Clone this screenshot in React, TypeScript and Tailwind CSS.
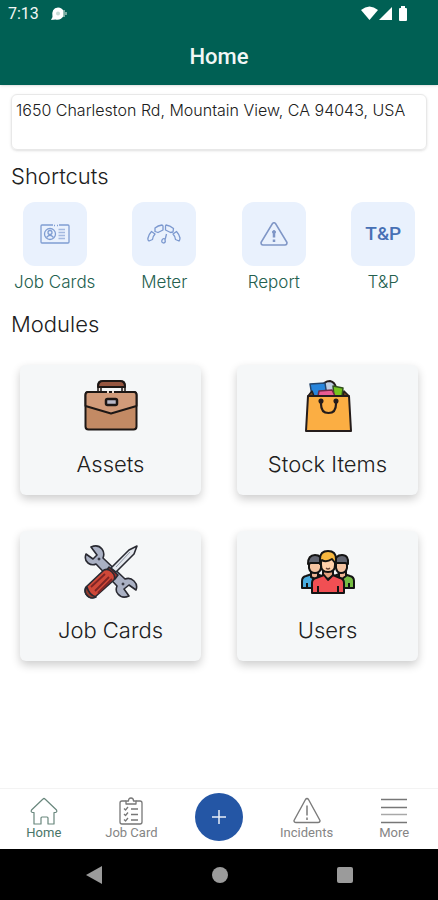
import type { ReactNode } from "react";

function StatusIcons() {
  return (
    <svg width="50" height="18" viewBox="0 0 50 18" fill="#fff" aria-hidden="true">
      <path d="M1 5Q9.500-2 18 5L9.500 15Z" />
      <path d="M19 15 32 2V15Z" />
      <path d="M41 1h4v2h1q1 0 1 1v11q0 1-1 1h-6q-1 0-1-1V4q0-1 1-1h1Z" />
    </svg>
  );
}

function NoticeIcon() {
  return (
    <svg width="16" height="14" viewBox="0 0 16 14" aria-hidden="true">
      <path d="M0 13 1.500 10Q0 1 7 .5q4 0 5.500 3.500v5Q10 13.500 4.500 12.500Z" fill="#fff" />
      <circle cx="7" cy="6.500" r="2" fill="#c7dbd6" />
      <path d="M13 3v7M15 5v3" stroke="#9fc3ba" strokeWidth="1.500" />
    </svg>
  );
}

function CardIcon() {
  return (
    <svg width="30" height="20" viewBox="0 0 30 20" fill="none" stroke="#7f9dd2" strokeWidth="1.300" aria-hidden="true">
      <path d="M13 1H2Q1 1 1 2V18q0 1 1 1H28q1 0 1-1V2q0-1-1-1H19M14 1.500h1M17 1.500h1" />
      <circle cx="10" cy="10" r="5.500" />
      <circle cx="10" cy="8.500" r="2" />
      <path d="M6.500 13.500q3.500-4.500 7 0" />
      <path d="M18.500 5.500H25M18.500 8.500H25M18.500 11.500H25M18.500 14.500H25" stroke="#a3b9e0" />
    </svg>
  );
}

function MeterIcon() {
  return (
    <svg width="34" height="20" viewBox="0 0 34 20" fill="none" stroke="#7b98cf" strokeWidth="1.300" strokeLinejoin="round" aria-hidden="true">
      <path d="M1 14q1-4 3.500-6.500L8 10q-2 2-2.500 5.500L2 17q-1.500-1-1-3Z" />
      <path d="M8 4q3-2.500 7-3l1 1v4l-5 2.500L8 7.500Z" />
      <path d="M19 1q4 .5 7.500 3.500L26 8l-2.500.5L18.500 6V2Z" />
      <path d="M29.500 7.500Q32 10 33 14q0 2-1 3l-3.500-1.500Q28 12 26 10Z" />
      <path d="m19.500 10-1.500 6q1 2-1 3-3 0-2-3 1-2 3-1" />
    </svg>
  );
}

function ReportIcon() {
  return (
    <svg width="28" height="24" viewBox="0 0 28 24" fill="none" stroke="#7f96c6" strokeLinejoin="round" aria-hidden="true">
      <path d="M12.500 1.500q1.500-1.500 3 0L27 20.500q0 2.500-2 2.500H3Q1 23 1 20.500Z" strokeWidth="1.500" />
      <path d="M14 9v6.500M14 17.500v2.500" strokeWidth="2.500" />
      <circle cx="14" cy="10" r="1.500" strokeWidth="1" />
    </svg>
  );
}

function BriefcaseIcon() {
  return (
    <svg width="54" height="54" viewBox="0 0 54 54" stroke="#1d1715" strokeWidth="2" strokeLinejoin="round" aria-hidden="true">
      <path d="M14 14V6q0-4 4-4H37q4 0 4 4v8H38V8H17v6Z" fill="#f0e7e2" strokeWidth="1.500" />
      <path d="M14 8q0-6 5-6H36q5 0 5 6Z" fill="#965640" />
      <rect x="1.500" y="13" width="51" height="37.500" rx="3" fill="#c38a64" />
      <path d="M4 13H50q2.500 0 2.500 3V27L27 34.500 1.500 27V16q0-3 2.500-3Z" fill="#d19b7a" />
      <rect x="22" y="20" width="11" height="6" rx="1.500" fill="#b9b9c8" strokeWidth="2.500" />
      <path d="M23 13h2M28 13h2" stroke="#eadbcf" />
    </svg>
  );
}

function BagIcon() {
  return (
    <svg width="54" height="54" viewBox="0 0 54 54" stroke="#241c1b" strokeWidth="1.500" strokeLinejoin="round" aria-hidden="true">
      <path d="M21 8q2-6 8-6 5 1 6 7v7H22Z" fill="#bfcde0" strokeWidth="2" />
      <path d="m9 5 15-1 2 13H11Z" fill="#2785dc" stroke="#23446b" />
      <path d="m32 7 10 2-1 8h-8Z" fill="#76c51e" stroke="#31501e" />
      <path d="m18 12 13-1 3 6H17Z" fill="#e95b92" stroke="#712946" />
      <path d="m7 17 4-5 2 5M42 17l1-5 5 5" fill="#70451e" />
      <path d="M7 17H48l2 35H5Z" fill="#fbae43" strokeWidth="2" />
      <path d="M20 22v3q0 9 7.500 9t7.500-9v-3" fill="none" strokeWidth="2.200" />
      <circle cx="20" cy="22" r="1.800" fill="#241c1b" />
      <circle cx="35" cy="22" r="1.800" fill="#241c1b" />
    </svg>
  );
}

function ToolsIcon() {
  return (
    <svg width="54" height="54" viewBox="0 0 54 54" stroke="#292a32" strokeWidth="1.600" strokeLinejoin="round" aria-hidden="true">
      <path
        d="M7 2Q14-1 18 4q3 4 1 9L41 34q5-2 9 2 4 4 2 9l-7-5-5 4 5 7q-7 3-11-2-3-3-1-8L12 19q-4 2-8-1-4-3-2-9l7 5 4-4Z"
        fill="#aab1c4"
      />
      <circle cx="15" cy="14" r="1" fill="#5b6070" strokeWidth="1" />
      <circle cx="39" cy="39" r="1" fill="#5b6070" strokeWidth="1" />
      <path d="m27 23 18-18 8-4-3 8-18 18Z" fill="#e4e8ee" />
      <path d="m32 22 14-15" stroke="#8e96a4" strokeWidth="1" />
      <path d="m23 25 2-3 9 8-3 4Z" fill="#9d302b" />
      <path d="M20 25 2 42q-2 3 0 7 4 5 9 3l19-17q2-4-2-8-4-4-8-2Z" fill="#cf4838" />
      <path d="M21 29 7 42M25 32 11 46M28 34 14 48" stroke="#7e2525" strokeWidth="1.800" />
      <path d="M3 42q2 8 9 10-6 3-10-3-2-4 1-7Z" fill="#963c2e" />
    </svg>
  );
}

function UsersIcon() {
  return (
    <svg width="54" height="54" viewBox="0 -5 54 54" stroke="#141414" strokeWidth="2" strokeLinejoin="round" aria-hidden="true">
      <path d="M1 38V31q0-4 4-5l6-2h5l7 3v11Z" fill="#48acdf" />
      <path d="M31 38V27l7-3h5l6 2q4 1 4 5v7Z" fill="#76bc43" />
      <path d="M10 20h7v7l-3 2-4-2ZM38 20h7v6l-4 3-3-2Z" fill="#eeb493" />
      <path d="M8 10h12v8q-1 5-6 5t-6-5ZM35 10h11v8q-1 5-6 5-4 0-5-5Z" fill="#f5c4a2" />
      <path d="M7 14Q7 5 14 5t7 8H10ZM34 13q0-8 7-8t6 9l-3-1Z" fill="#626571" />
      <path d="M6 33v5M48 33v5" />
      <path d="M22 18h10v8l-5 3-5-3Z" fill="#e5a27f" />
      <path d="M11 43V33q0-4 4-5l8-3 4 5 5-5 7 3q4 1 4 5v10Z" fill="#f14f53" />
      <path d="M17 36v7M37 36v7" />
      <path d="M20 9h14v6q0 7-7 7t-7-7Z" fill="#ffd0aa" />
      <path d="M19 14V9q0-8 8-8t8 8v5l-4-5q-6 4-10 1Z" fill="#f6b73f" />
      <path d="M25 18q2 2 4 0" fill="none" stroke="#6a4232" strokeWidth="1.200" />
    </svg>
  );
}

function HomeIcon() {
  return (
    <svg width="28" height="28" viewBox="0 0 28 28" fill="none" stroke="#69877d" strokeWidth="1.200" strokeLinejoin="round" aria-hidden="true">
      <path d="M13 2q1-1 2 0L26.500 13q1 2-1 2.500H24V27H18V21q0-1-1-1h-5q-1 0-1 1v6H4V15.500H2.500q-2-.5-1-2.500Z" />
    </svg>
  );
}

function ClipboardIcon() {
  return (
    <svg width="28" height="28" viewBox="0 0 28 28" fill="none" stroke="#777" strokeWidth="1.300" strokeLinejoin="round" aria-hidden="true">
      <path d="M9 4H5Q3 4 3 6V25q0 2 2 2H23q2 0 2-2V6q0-2-2-2H19" />
      <path d="M9 7V4h2.500q0-3 2.500-3t2.500 3H19v3Z" />
      <path d="M14 12h7M14 17.500h7M14 23h7M7 11.500l1.500 1.500L11 10M7 17l1.500 1.500L11 15.500M7 22.500 8.500 24l2.500-3" />
    </svg>
  );
}

function IncidentIcon() {
  return (
    <svg width="28" height="28" viewBox="0 0 28 28" fill="none" stroke="#7b7b7b" strokeLinejoin="round" aria-hidden="true">
      <path d="M12.500 2.500q1.500-2 3 0L27 23.500q0 2-2 2H3q-2 0-2-2Z" strokeWidth="1.400" />
      <path d="M14 8.500V18.500M14 20.500v2.500" strokeWidth="1.500" />
    </svg>
  );
}

function MenuIcon() {
  return (
    <svg width="28" height="28" viewBox="0 0 28 28" stroke="#777" strokeWidth="1.500" aria-hidden="true">
      <path d="M1 2.500H27M1 10.500H27M1 25.500H27" />
      <path d="M1 17.500H27" stroke="#a8a8a8" />
    </svg>
  );
}

const shortcuts: { label: string; icon: ReactNode }[] = [
  { label: "Job Cards", icon: <CardIcon /> },
  { label: "Meter", icon: <MeterIcon /> },
  { label: "Report", icon: <ReportIcon /> },
  { label: "T&P", icon: <span className="font-['Roboto',sans-serif] text-[19px] font-medium text-[#4770b5]">T&amp;P</span> },
];

const modules: { label: string; icon: ReactNode }[] = [
  { label: "Assets", icon: <BriefcaseIcon /> },
  { label: "Stock Items", icon: <BagIcon /> },
  { label: "Job Cards", icon: <ToolsIcon /> },
  { label: "Users", icon: <UsersIcon /> },
];

function NavItem({ label, icon, active = false }: { label: string; icon: ReactNode; active?: boolean }) {
  return (
    <button type="button" className={`flex flex-col items-center justify-start pt-2 text-[13px] leading-4 ${active ? "text-[#497568]" : "text-[#858585]"}`}>
      {icon}
      <span>{label}</span>
    </button>
  );
}

export default function App() {
  return (
    <div className="flex min-h-screen flex-col bg-white font-['Inter',sans-serif] font-light text-[#202020]">
      <header className="bg-[#006054] font-['Roboto',sans-serif] text-[#f2f7f5] shadow-sm">
        <div className="flex h-7 items-center justify-between pr-7 pl-2">
          <div className="flex items-center gap-3">
            <span className="text-base leading-7 font-normal">7:13</span>
            <NoticeIcon />
          </div>
          <StatusIcons />
        </div>
        <h1 className="pt-4 pb-4 text-center text-[22px] leading-[25px] font-medium">Home</h1>
      </header>

      <main className="flex-1">
        <p className="mx-[11px] mt-[9px] min-h-14 rounded-md border border-[#e8e8e8] px-1 pt-[3px] text-base leading-6 whitespace-nowrap shadow-sm">
          1650 Charleston Rd, Mountain View, CA 94043, USA
        </p>

        <section>
          <h2 className="mt-3 px-[11px] text-[22px] leading-7">Shortcuts</h2>
          <div className="mt-3 grid grid-cols-4">
            {shortcuts.map(({ label, icon }) => (
              <button key={label} type="button" className="flex flex-col items-center gap-1 text-[17px] leading-6 text-[#24604e]">
                <span className="flex size-16 items-center justify-center rounded-xl bg-[#e9f1fd]">{icon}</span>
                <span>{label}</span>
              </button>
            ))}
          </div>
        </section>

        <section>
          <h2 className="mt-4 px-[11px] text-[22px] leading-7">Modules</h2>
          <div className="mt-[27px] grid grid-cols-2 gap-9 px-5 pb-6">
            {modules.map(({ label, icon }) => (
              <button
                key={label}
                type="button"
                className="flex h-[130px] flex-col items-center gap-[15px] rounded-md bg-[#f5f7f8] pt-[14px] text-[22px] leading-8 shadow-[0_4px_10px_rgba(0,0,0,0.2)]"
              >
                {icon}
                <span>{label}</span>
              </button>
            ))}
          </div>
        </section>
      </main>

      <nav className="grid h-[61px] grid-cols-5 border-t border-[#f3f3f3] font-['Roboto',sans-serif] font-normal">
        <NavItem label="Home" icon={<HomeIcon />} active />
        <NavItem label="Job Card" icon={<ClipboardIcon />} />
        <button type="button" aria-label="Add" className="mt-1 flex size-12 items-center justify-center justify-self-center rounded-full bg-[#2456a5]">
          <svg width="16" height="16" viewBox="0 0 16 16" stroke="#e8eef8" strokeWidth="1.500" aria-hidden="true">
            <path d="M8 1V15M1 8H15" />
          </svg>
        </button>
        <NavItem label="Incidents" icon={<IncidentIcon />} />
        <NavItem label="More" icon={<MenuIcon />} />
      </nav>

      <div className="flex h-[51px] items-center justify-around bg-black px-[30px]">
        <button type="button" aria-label="Back">
          <svg width="18" height="18" viewBox="0 0 18 18" fill="#9b9b9b" aria-hidden="true">
            <path d="M17 0V18L1 9Z" />
          </svg>
        </button>
        <button type="button" aria-label="Home screen" className="size-4 rounded-full bg-[#9b9b9b]" />
        <button type="button" aria-label="Recent apps" className="size-4 rounded-xs bg-[#9b9b9b]" />
      </div>
    </div>
  );
}
